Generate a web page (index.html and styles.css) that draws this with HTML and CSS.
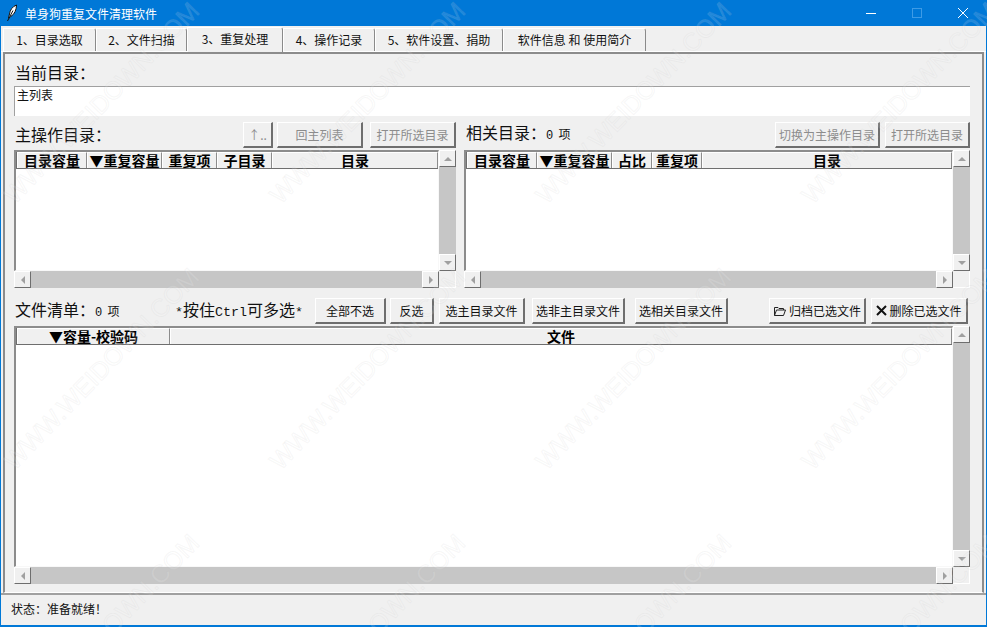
FILE: index.html
```html
<!DOCTYPE html>
<html>
<head>
  <meta charset="UTF-8">
  <title>单身狗重复文件清理软件</title>
  <link rel="stylesheet" href="styles.css">
</head>
<body>
  <div class="window">
    <div class="titlebar">
      <svg class="app-icon" width="12" height="18" viewBox="0 0 12 18">
        <path d="M10.500 1C6.500 2.500 4 6 3.500 10L2.500 14L4 13.500C4.500 12.500 5 12 6 11.500C8.500 10 10.500 5.500 10.500 1Z" fill="#fff" stroke="#111" stroke-width="1"/>
        <path d="M1.500 17L7 6.500" stroke="#111" stroke-width="1"/>
      </svg>
      <div class="title">单身狗重复文件清理软件</div>
      <div class="win-btn">
        <svg width="10" height="10" viewBox="0 0 10 10"><path d="M0 5.500H10" stroke="#fff"/></svg>
      </div>
      <div class="win-btn">
        <svg width="10" height="10" viewBox="0 0 10 10"><rect x="0.500" y="0.500" width="9" height="9" fill="none" stroke="#3d9be6"/></svg>
      </div>
      <div class="win-btn">
        <svg width="10" height="10" viewBox="0 0 10 10"><path d="M0 0L10 10M10 0L0 10" stroke="#fff"/></svg>
      </div>
    </div>

    <div class="tabs">
      <div class="tab t1">1、目录选取</div>
      <div class="tab t2">2、文件扫描</div>
      <div class="tab t3 active">3、重复处理</div>
      <div class="tab t4">4、操作记录</div>
      <div class="tab t5">5、软件设置、捐助</div>
      <div class="tab t6">软件信息 和 使用简介</div>
    </div>

    <div class="panel">
      <div class="big-label cur-label">当前目录：</div>
      <div class="path-box">主列表</div>

      <div class="two-cols">
        <div class="col col-left">
          <div class="toolbar">
            <div class="big-label">主操作目录：</div>
            <div class="spacer"></div>
            <button class="btn disabled b-up">↑..</button>
            <button class="btn disabled b-home">回主列表</button>
            <button class="btn disabled b-open">打开所选目录</button>
          </div>
          <div class="tree-wrap">
            <div class="tree">
              <div class="tree-head">
                <div class="th w70">目录容量</div>
                <div class="th w75">▼重复容量</div>
                <div class="th w55">重复项</div>
                <div class="th w55">子目录</div>
                <div class="th grow">目录</div>
              </div>
            </div>
            <div class="vbar">
              <div class="sb-btn"><span class="arr up"></span></div>
              <div class="sb-track"></div>
              <div class="sb-btn"><span class="arr down"></span></div>
            </div>
            <div class="hbar">
              <div class="sb-btn"><span class="arr left"></span></div>
              <div class="sb-track"></div>
              <div class="sb-btn"><span class="arr right"></span></div>
            </div>
            <div class="corner"></div>
          </div>
        </div>

        <div class="col col-right">
          <div class="toolbar toolbar-right">
            <div class="big-label">相关目录：<span class="count"><span class="num">0 </span>项</span></div>
            <div class="spacer"></div>
            <button class="btn disabled b-switch">切换为主操作目录</button>
            <button class="btn disabled b-open2">打开所选目录</button>
          </div>
          <div class="tree-wrap">
            <div class="tree">
              <div class="tree-head">
                <div class="th w70">目录容量</div>
                <div class="th w75">▼重复容量</div>
                <div class="th w40">占比</div>
                <div class="th w50">重复项</div>
                <div class="th grow">目录</div>
              </div>
            </div>
            <div class="vbar">
              <div class="sb-btn"><span class="arr up"></span></div>
              <div class="sb-track"></div>
              <div class="sb-btn"><span class="arr down"></span></div>
            </div>
            <div class="hbar">
              <div class="sb-btn"><span class="arr left"></span></div>
              <div class="sb-track"></div>
              <div class="sb-btn"><span class="arr right"></span></div>
            </div>
            <div class="corner"></div>
          </div>
        </div>
      </div>

      <div class="file-bar">
        <div class="big-label file-label">文件清单：<span class="count"><span class="num">0 </span>项</span></div>
        <div class="big-label hint"><span class="mono">*</span>按住<span class="mono">Ctrl</span>可多选<span class="mono">*</span></div>
        <button class="btn b-none">全部不选</button>
        <button class="btn b-inv">反选</button>
        <button class="btn b-main">选主目录文件</button>
        <button class="btn b-nonmain">选非主目录文件</button>
        <button class="btn b-rel">选相关目录文件</button>
        <div class="spacer"></div>
        <button class="btn b-arch">
          <svg width="14" height="12" viewBox="0 0 14 12"><path d="M1.500 10.500V2.500H5L6 3.500H10.500V5M1.500 10.500H10.500L12.500 5H3.500L1.500 10.500Z" fill="none" stroke="#222"/></svg>归档已选文件
        </button>
        <button class="btn b-del">
          <svg width="11" height="11" viewBox="0 0 11 11"><path d="M1 1L10 10M10 1L1 10" stroke="#111" stroke-width="2"/></svg>删除已选文件
        </button>
      </div>

      <div class="tree-wrap file-tree">
        <div class="tree">
          <div class="tree-head">
            <div class="th w153">▼容量-校验码</div>
            <div class="th grow">文件</div>
          </div>
        </div>
        <div class="vbar">
          <div class="sb-btn"><span class="arr up"></span></div>
          <div class="sb-track"></div>
          <div class="sb-btn"><span class="arr down"></span></div>
        </div>
        <div class="hbar">
          <div class="sb-btn"><span class="arr left"></span></div>
          <div class="sb-track"></div>
          <div class="sb-btn"><span class="arr right"></span></div>
        </div>
        <div class="corner"></div>
      </div>
    </div>

    <div class="statusbar">状态：准备就绪！</div>
  </div>

  <!-- watermark over the whole shot -->
  <div class="watermark">
    <div class="wm-grid">
      <span>WWW.WEIDOWN.COM</span><span>WWW.WEIDOWN.COM</span><span>WWW.WEIDOWN.COM</span><span>WWW.WEIDOWN.COM</span>
      <span>WWW.WEIDOWN.COM</span><span>WWW.WEIDOWN.COM</span><span>WWW.WEIDOWN.COM</span><span>WWW.WEIDOWN.COM</span>
      <span>WWW.WEIDOWN.COM</span><span>WWW.WEIDOWN.COM</span><span>WWW.WEIDOWN.COM</span><span>WWW.WEIDOWN.COM</span>
    </div>
  </div>
</body>
</html>
```

FILE: styles.css
```css
html, body {
  margin: 0;
  padding: 0;
  overflow: hidden;
}

body {
  width: 987px;
  height: 627px;
  position: relative;
  font-family: "Noto Sans CJK SC", "Liberation Sans", sans-serif;
  font-size: 12px;
  color: #111;
  background: #f0f0f0;
}

.window {
  width: 987px;
  height: 627px;
  box-sizing: border-box;
  border: 1px solid #0078d7;
  border-top: none;
  border-bottom-width: 2px;
  display: flex;
  flex-direction: column;
  background: #f0f0f0;
}

.titlebar {
  height: 26px;
  flex: none;
  background: #0078d7;
  color: #fff;
  display: flex;
  align-items: center;
  padding-left: 5px;
}

.app-icon {
  margin-right: 7px;
}

.title {
  flex: 1;
  font-size: 12px;
}

.win-btn {
  width: 46px;
  height: 26px;
  display: flex;
  align-items: center;
  justify-content: center;
}

.tabs {
  height: 25px;
  flex: none;
  display: flex;
  padding-left: 2px;
  align-items: flex-end;
  border-bottom: 1px solid #fff;
}

.tab {
  box-sizing: border-box;
  height: 23px;
  text-align: center;
  line-height: 22px;
  font-size: 12px;
  border-left: 1px solid #fff;
  border-top: 1px solid #fff;
  border-right: 1px solid #8a8a8a;
  border-top-right-radius: 3px;
}

.tab.active {
  height: 25px;
  line-height: 21px;
  margin-bottom: -1px;
  background: #f0f0f0;
}

.t1 { width: 93px; }
.t2 { width: 91px; }
.t3 { width: 96px; }
.t4 { width: 92px; }
.t5 { width: 128px; }
.t6 { width: 143px; }

.panel {
  box-sizing: border-box;
  height: 541px;
  flex: none;
  margin: 0 2px;
  padding: 7px 12px 0 9px;
  border-top: 2px solid #8c8c8c;
  border-left: 2px solid #8c8c8c;
  border-right: 2px solid #8c8c8c;
  border-bottom: 1px solid #fff;
}

.big-label {
  font-size: 16px;
  line-height: 22px;
  white-space: nowrap;
}

.cur-label {
  height: 25px;
  padding-left: 1px;
}

.path-box {
  height: 30px;
  box-sizing: border-box;
  background: #fff;
  border-top: 1px solid #a0a0a0;
  border-left: 1px solid #a0a0a0;
  padding-left: 2px;
  font-size: 12px;
  line-height: 15px;
}

.two-cols {
  display: flex;
  gap: 8px;
  margin-top: 6px;
}

.col-left {
  width: 442px;
}

.col-right {
  width: 506px;
}

.toolbar {
  display: flex;
  align-items: center;
  height: 25px;
  padding-left: 1px;
  margin-bottom: 3px;
}

.toolbar .big-label {
  margin-top: -2px;
}

.toolbar-right {
  padding-left: 2px;
}

.spacer {
  flex: 1;
}

.count {
  font-size: 12px;
}

.num {
  font-family: "Liberation Mono", monospace;
  letter-spacing: -1px;
  white-space: pre;
}

.btn {
  box-sizing: border-box;
  height: 26px;
  padding: 0;
  font-family: "Noto Sans CJK SC", "Liberation Sans", sans-serif;
  font-size: 12px;
  color: #111;
  background: #f0f0f0;
  border-top: 1px solid #fff;
  border-left: 1px solid #fff;
  border-right: 2px solid #6e6e6e;
  border-bottom: 2px solid #6e6e6e;
  display: flex;
  align-items: center;
  justify-content: center;
  flex: none;
}

.btn.disabled {
  color: #8c8c8c;
}

.b-up { width: 30px; margin-right: 4px; }
.b-home { width: 86px; margin-right: 7px; }
.b-open { width: 86px; }
.b-switch { width: 105px; margin-right: 5px; }
.b-open2 { width: 85px; }

.tree-wrap {
  display: grid;
  grid-template-columns: 1fr 17px;
  grid-template-rows: 121px 17px;
}

.tree {
  box-sizing: border-box;
  background: #fff;
  border-top: 2px solid #8c8c8c;
  border-left: 2px solid #8c8c8c;
  border-right: 1px solid #f8f8f8;
  border-bottom: 1px solid #f8f8f8;
}

.tree-head {
  display: flex;
  height: 17px;
  background: #6e6e6e;
  box-sizing: border-box;
  padding: 0 0 1px 1px;
}

.th {
  box-sizing: border-box;
  flex: none;
  background: #f0f0f0;
  border-top: 1px solid #fff;
  border-left: 1px solid #fff;
  border-right: 1px solid #8c8c8c;
  font-size: 14px;
  font-weight: 700;
  line-height: 15px;
  text-align: center;
  white-space: nowrap;
  color: #000;
}

.th.grow {
  flex: 1;
}

.w40 { width: 40px; }
.w50 { width: 50px; }
.w55 { width: 55px; }
.w70 { width: 70px; }
.w75 { width: 75px; }
.w153 { width: 153px; }

.vbar {
  display: flex;
  flex-direction: column;
}

.hbar {
  display: flex;
}

.sb-track {
  flex: 1;
  background: #c6c6c6;
}

.sb-btn {
  box-sizing: border-box;
  width: 17px;
  height: 17px;
  flex: none;
  background: #f0f0f0;
  border-top: 1px solid #fff;
  border-left: 1px solid #fff;
  border-right: 1px solid #6e6e6e;
  border-bottom: 1px solid #6e6e6e;
  display: flex;
  align-items: center;
  justify-content: center;
}

.arr {
  width: 0;
  height: 0;
  border-style: solid;
  border-color: transparent;
}

.arr.up { border-width: 0 4px 4px; border-bottom-color: #a0a0a0; }
.arr.down { border-width: 4px 4px 0; border-top-color: #a0a0a0; }
.arr.left { border-width: 4px 4px 4px 0; border-right-color: #a0a0a0; }
.arr.right { border-width: 4px 0 4px 4px; border-left-color: #a0a0a0; }

.corner {
  background: #f0f0f0;
  border-right: 1px solid #fff;
  border-bottom: 1px solid #fff;
}

.file-bar {
  display: flex;
  align-items: center;
  height: 28px;
  margin-top: 9px;
  padding-left: 1px;
}

.file-label { width: 160px; }
.hint { width: 140px; }

.mono {
  font-family: "Liberation Mono", monospace;
  font-size: 13.33px;
}

.b-none { width: 71px; margin-right: 4px; }
.b-inv { width: 44px; margin-right: 5px; }
.b-main { width: 86px; margin-right: 7px; }
.b-nonmain { width: 93px; margin-right: 10px; }
.b-rel { width: 93px; }
.b-arch { width: 97px; margin-right: 5px; gap: 2px; }
.b-del { width: 97px; margin-right: 2px; gap: 2px; }

.file-tree {
  grid-template-rows: 241px 17px;
  margin-top: 1px;
}

.statusbar {
  flex: 1;
  border-top: 2px solid #a0a0a0;
  padding-left: 10px;
  line-height: 27px;
  font-size: 12px;
}

.watermark {
  position: absolute;
  left: 0;
  top: 0;
  width: 987px;
  height: 627px;
  overflow: hidden;
  pointer-events: none;
}

.wm-grid {
  display: grid;
  grid-template-columns: repeat(4, 266px);
  grid-auto-rows: 266px;
  margin: 184px 0 0 8px;
}

.wm-grid span {
  font-family: "Liberation Sans", sans-serif;
  font-size: 25px;
  line-height: 30px;
  height: 30px;
  white-space: nowrap;
  color: rgba(255, 255, 255, 0.12);
  -webkit-text-stroke: 1px rgba(190, 190, 190, 0.12);
  transform: rotate(-46deg);
  transform-origin: 0 50%;
}
```
